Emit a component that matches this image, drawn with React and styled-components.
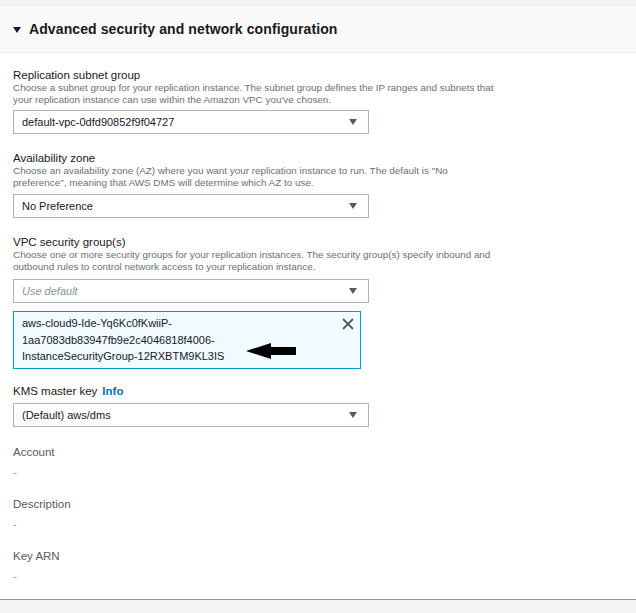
import React from 'react'
import styled, { createGlobalStyle } from 'styled-components'

const GlobalStyle = createGlobalStyle`
  html, body {
    margin: 0;
    padding: 0;
    background: #f2f3f3;
  }
  body {
    font-family: "Liberation Sans", Arial, sans-serif;
    color: #16191f;
  }
`

const Page = styled.div`
  width: 636px;
  height: 613px;
  overflow: hidden;
  background: #f2f3f3;
`

const TopStrip = styled.div`
  height: 5px;
  border-bottom: 1px solid #eaeded;
`

const Panel = styled.section`
  height: 594px;
  box-sizing: border-box;
  background: #ffffff;
  border-bottom: 1px solid #8d9a9b;
  display: flex;
  flex-direction: column;
`

const Header = styled.div`
  height: 47px;
  flex-shrink: 0;
  box-sizing: border-box;
  background: #fafafa;
  border-bottom: 1px solid #eaeded;
  display: flex;
  align-items: center;
  padding-left: 13px;
  gap: 8px;
`

const Caret = styled.span`
  width: 0;
  height: 0;
  border-left: 4px solid transparent;
  border-right: 4px solid transparent;
  border-top: 6px solid #16191f;
  margin-top: 1px;
`

const Title = styled.h2`
  margin: 0;
  font-size: 14px;
  font-weight: 700;
  letter-spacing: 0.1px;
  color: #16191f;
`

const Body = styled.div`
  padding: 15px 13px 0 13px;
  display: flex;
  flex-direction: column;
`

const Field = styled.div`
  display: flex;
  flex-direction: column;
  margin-top: ${({ top }) => top ?? 0}px;
  margin-bottom: ${({ gap }) => gap ?? 17}px;
`

const Label = styled.div`
  font-size: 11.5px;
  line-height: 14px;
  color: #16191f;
  display: flex;
  gap: 5px;
`

const Info = styled.span`
  color: #0073bb;
  font-weight: 700;
`

const Description = styled.div`
  font-size: 9.9px;
  line-height: 11.5px;
  color: #687078;
  white-space: nowrap;
`

const SelectBox = styled.div`
  margin-top: ${({ mt }) => mt ?? 6}px;
  width: 356px;
  height: 24px;
  box-sizing: border-box;
  border: 1px solid #aab7b8;
  display: flex;
  align-items: center;
  justify-content: space-between;
  padding: 0 11px 0 8px;
  font-size: 11px;
  color: ${({ placeholder }) => (placeholder ? '#879596' : '#16191f')};
  font-style: ${({ placeholder }) => (placeholder ? 'italic' : 'normal')};
  background: #ffffff;
`

const DropCaret = styled.span`
  width: 0;
  height: 0;
  border-left: 4.5px solid transparent;
  border-right: 4.5px solid transparent;
  border-top: 6px solid #545b64;
`

const Token = styled.div`
  position: relative;
  margin-top: 8px;
  width: 348px;
  box-sizing: border-box;
  border: 1px solid #00a1c9;
  background: #f1faff;
  padding: 3px 30px 3px 8px;
  font-size: 11px;
  line-height: 16.5px;
  color: #16191f;
`

const Dismiss = styled.span`
  position: absolute;
  top: 5px;
  right: 5px;
  display: flex;
`

const Pointer = styled.span`
  position: absolute;
  left: 232px;
  top: 30px;
  display: flex;
`

const KeyValue = styled.div`
  display: flex;
  flex-direction: column;
  margin-bottom: 18px;
`

const KeyLabel = styled.div`
  font-size: 11.5px;
  line-height: 14px;
  color: #545b64;
`

const KeyDash = styled.div`
  font-size: 11px;
  line-height: 14px;
  margin-top: 6px;
  color: #879596;
`

function Select({ value, placeholder, mt }) {
  return (
    <SelectBox placeholder={placeholder ? 1 : undefined} mt={mt}>
      <span>{value}</span>
      <DropCaret />
    </SelectBox>
  )
}

const details = ['Account', 'Description', 'Key ARN']

export default function App() {
  return (
    <Page>
      <GlobalStyle />
      <TopStrip />
      <Panel>
        <Header>
          <Caret />
          <Title>Advanced security and network configuration</Title>
        </Header>
        <Body>
          <Field>
            <Label>Replication subnet group</Label>
            <Description>
              Choose a subnet group for your replication instance. The subnet group defines the IP ranges and subnets that
              <br />
              your replication instance can use within the Amazon VPC you've chosen.
            </Description>
            <Select value="default-vpc-0dfd90852f9f04727" mt={5} />
          </Field>
          <Field>
            <Label>Availability zone</Label>
            <Description>
              Choose an availability zone (AZ) where you want your replication instance to run. The default is "No
              <br />
              preference", meaning that AWS DMS will determine which AZ to use.
            </Description>
            <Select value="No Preference" mt={6} />
          </Field>
          <Field>
            <Label>VPC security group(s)</Label>
            <Description>
              Choose one or more security groups for your replication instances. The security group(s) specify inbound and
              <br />
              outbound rules to control network access to your replication instance.
            </Description>
            <Select value="Use default" placeholder mt={7} />
            <Token>
              aws-cloud9-Ide-Yq6Kc0fKwiiP-<br />
              1aa7083db83947fb9e2c4046818f4006-<br />
              InstanceSecurityGroup-12RXBTM9KL3IS
              <Dismiss>
                <svg width="14" height="14" viewBox="0 0 14 14">
                  <path d="M2 2 L12 12 M12 2 L2 12" stroke="#545b64" strokeWidth="1.8" fill="none" />
                </svg>
              </Dismiss>
              <Pointer>
                <svg width="51" height="18" viewBox="0 0 51 18">
                  <path d="M0 9 L25 1 L25 5 L50 5 L50 13 L25 13 L25 17 Z" fill="#000" />
                </svg>
              </Pointer>
            </Token>
          </Field>
          <Field gap={18} top={-2}>
            <Label>
              KMS master key <Info>Info</Info>
            </Label>
            <Select value="(Default) aws/dms" mt={5} />
          </Field>
          {details.map((d) => (
            <KeyValue key={d}>
              <KeyLabel>{d}</KeyLabel>
              <KeyDash>-</KeyDash>
            </KeyValue>
          ))}
        </Body>
      </Panel>
    </Page>
  )
}
